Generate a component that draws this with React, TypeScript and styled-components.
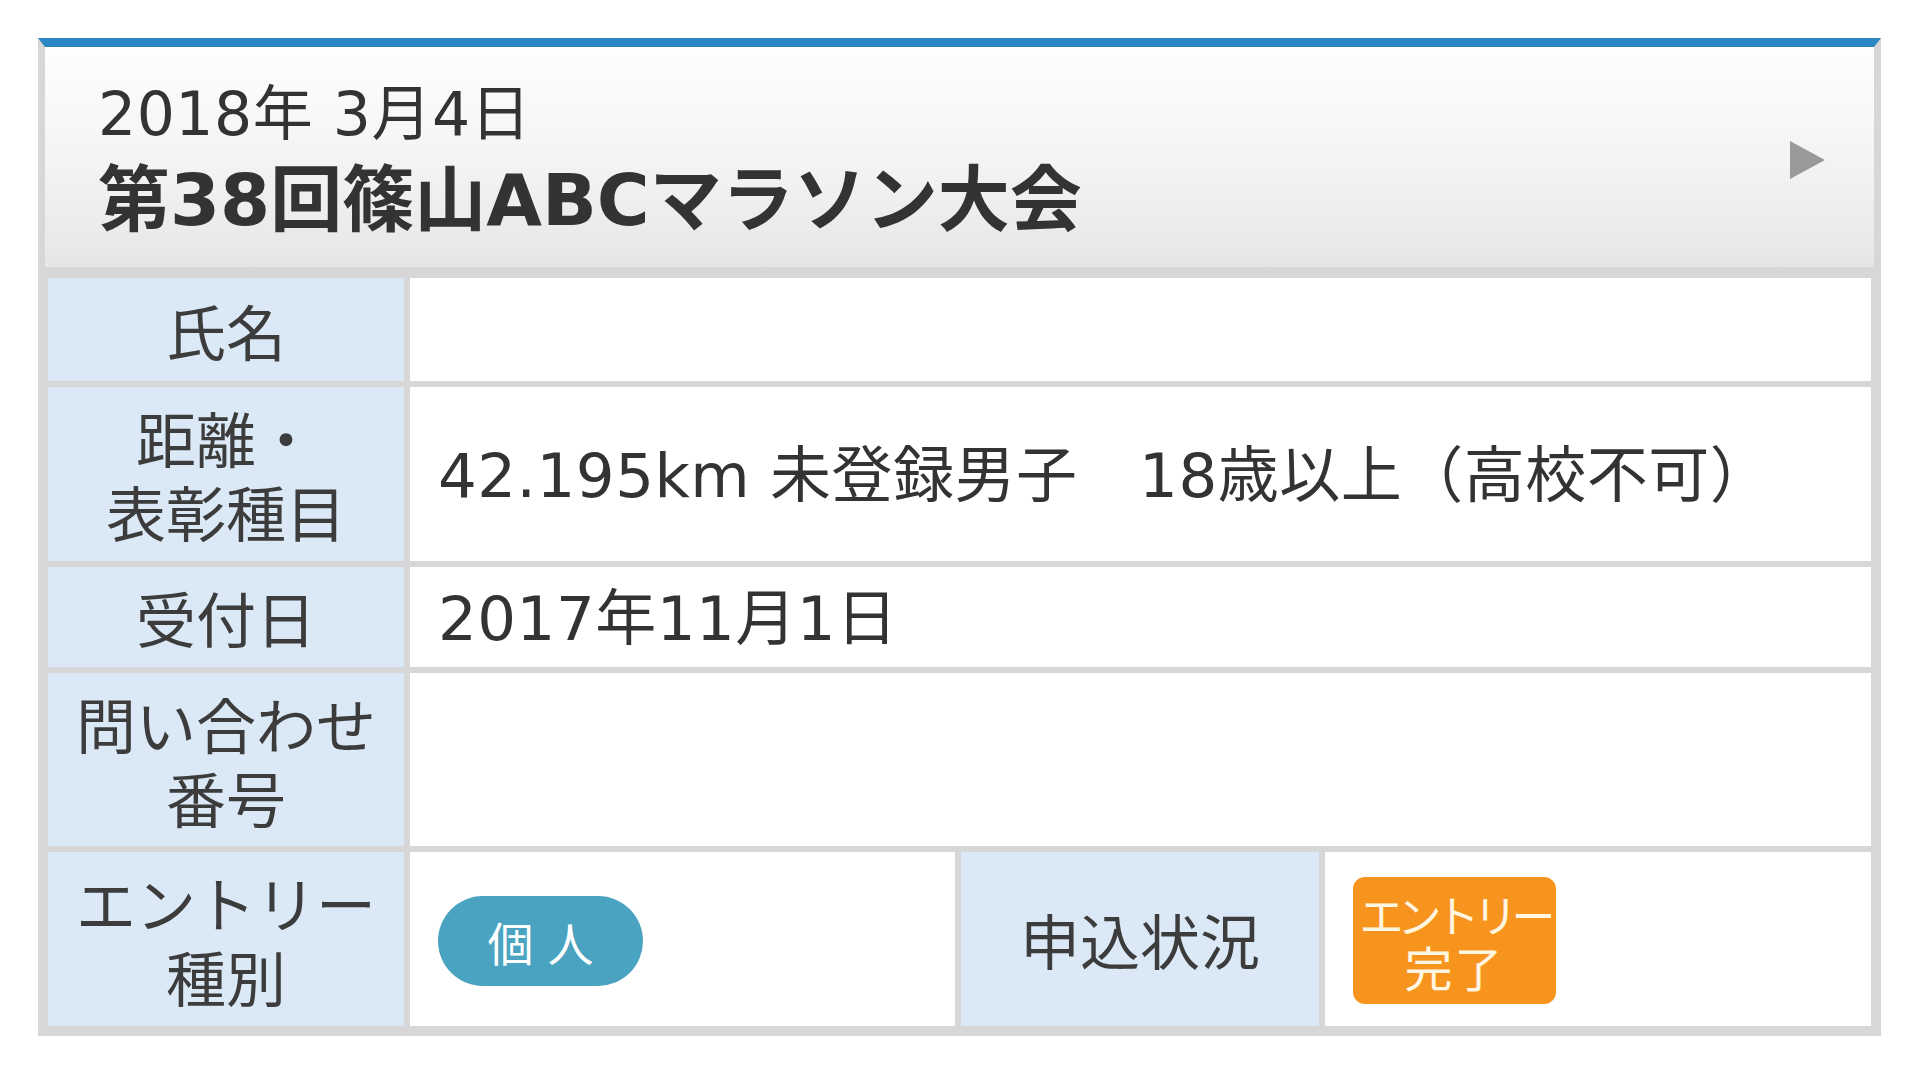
import React from "react";
import styled, { createGlobalStyle } from "styled-components";

const Global = createGlobalStyle`
  html, body {
    margin: 0;
    padding: 0;
    background: #ffffff;
  }
  body {
    font-family: "Noto Sans CJK JP", "Noto Sans", sans-serif;
    color: #333333;
  }
`;

const latinFirst = `"DejaVu Sans", "Noto Sans CJK JP", sans-serif`;

const Page = styled.div`
  padding: 38px 39px 40px 38px;
`;

const Card = styled.section`
  border-top: 9px solid #2a87c3;
  border-left: 7px solid #d7d7d7;
  border-right: 7px solid #d7d7d7;
  border-bottom: 7px solid #d7d7d7;
  background: #d7d7d7;
`;

const Header = styled.header`
  height: 220px;
  box-sizing: border-box;
  padding: 6px 49px 0 53px;
  display: flex;
  align-items: center;
  justify-content: space-between;
  background: linear-gradient(#fefefe 0%, #f3f3f3 55%, #e6e6e6 100%);
`;

const HeaderText = styled.div`
  display: flex;
  flex-direction: column;
`;

const EventDate = styled.div`
  font-family: ${latinFirst};
  font-size: 60px;
  line-height: 80px;
  color: #333333;
  font-weight: 400;
  letter-spacing: 0.5px;
`;

const EventTitle = styled.h1`
  margin: 0;
  font-family: ${latinFirst};
  font-size: 72px;
  line-height: 92px;
  font-weight: 700;
  color: #333333;
`;

const Arrow = styled.div`
  width: 0;
  height: 0;
  border-top: 19px solid transparent;
  border-bottom: 19px solid transparent;
  border-left: 35px solid #9a9a9a;
`;

const Table = styled.div`
  display: grid;
  grid-template-columns: 356px 545px 358px 1fr;
  grid-template-rows: 103px 174px 100px 173px 174px;
  gap: 6px;
  padding: 11px 3px 3px 3px;
  background: #d7d7d7;
`;

const Label = styled.div`
  background: #dbe9f7;
  display: flex;
  align-items: center;
  justify-content: center;
  text-align: center;
  font-size: 60px;
  line-height: 74px;
  color: #3c3c3c;
`;

const Value = styled.div<{ $span?: boolean }>`
  background: #ffffff;
  grid-column: ${(p) => (p.$span ? "2 / 5" : "auto")};
  display: flex;
  align-items: center;
  padding-left: 28px;
  padding-top: 3px;
  font-family: ${latinFirst};
  font-size: 61px;
  letter-spacing: 0.5px;
  line-height: 72px;
  color: #333333;
  white-space: pre;
`;

const Pill = styled.span`
  display: inline-flex;
  align-items: center;
  justify-content: center;
  width: 205px;
  height: 90px;
  border-radius: 45px;
  background: #4aa3c0;
  color: #ffffff;
  font-family: "Noto Sans CJK JP", sans-serif;
  font-size: 46px;
  line-height: 1;
  letter-spacing: 14px;
  padding-left: 14px;
  box-sizing: border-box;
`;

const StatusBadge = styled.span`
  display: inline-flex;
  flex-direction: column;
  align-items: center;
  justify-content: center;
  width: 203px;
  height: 127px;
  border-radius: 12px;
  background: #f7941d;
  color: #fff6e2;
  font-family: "Noto Sans CJK JP", sans-serif;
`;

const BadgeLine = styled.span<{ $tight?: boolean }>`
  display: block;
  letter-spacing: ${(p) => (p.$tight ? "-6px" : "2px")};
  font-size: ${(p) => (p.$tight ? "44px" : "48px")};
  line-height: ${(p) => (p.$tight ? "50px" : "54px")};
`;

export default function App() {
  return (
    <>
      <Global />
      <Page>
        <Card>
          <Header>
            <HeaderText>
              <EventDate>2018年 3月4日</EventDate>
              <EventTitle>第38回篠山ABCマラソン大会</EventTitle>
            </HeaderText>
            <Arrow />
          </Header>
          <Table>
            <Label>氏名</Label>
            <Value $span />

            <Label>
              距離・
              <br />
              表彰種目
            </Label>
            <Value $span>{"42.195km 未登録男子　18歳以上（高校不可）"}</Value>

            <Label>受付日</Label>
            <Value $span>2017年11月1日</Value>

            <Label>
              問い合わせ
              <br />
              番号
            </Label>
            <Value $span />

            <Label>
              エントリー
              <br />
              種別
            </Label>
            <Value>
              <Pill>個人</Pill>
            </Value>
            <Label>申込状況</Label>
            <Value>
              <StatusBadge>
                <BadgeLine $tight>エントリー</BadgeLine>
                <BadgeLine>完了</BadgeLine>
              </StatusBadge>
            </Value>
          </Table>
        </Card>
      </Page>
    </>
  );
}
